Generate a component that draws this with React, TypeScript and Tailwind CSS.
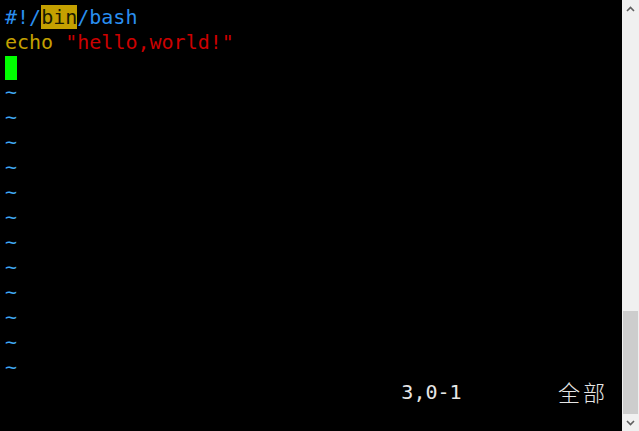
import React from 'react';

const tildes = Array.from({ length: 12 });

const App = () => {
  return (
    <div className="flex w-[639px] h-[431px] bg-black overflow-hidden">
      <div
        className="flex-1 pl-[4px] pt-[5px] text-[20px] leading-[25px] whitespace-pre"
        style={{ fontFamily: '"DejaVu Sans Mono", "Noto Sans CJK SC", monospace' }}
      >
        <div className="h-[25px] pl-[1px] text-[#2a8ff0]">
          #!/<span className="bg-[#c4a000] text-[#1a1a00]">bin</span>/bash
        </div>
        <div className="h-[25px] pl-[1px]">
          <span className="text-[#c4a000]">echo</span> <span className="text-[#cc0000]">"hello,world!"</span>
        </div>
        <div className="h-[25px] pl-[1px] flex items-center">
          <div className="w-[12px] h-[24px] bg-[#00ff00]" />
        </div>
        {tildes.map((_, i) => (
          <div key={i} className="h-[25px] pl-[1px] text-[#3fa9f5]">~</div>
        ))}
        <div className="h-[25px] text-[#e6e6e6] flex items-center">
          <span>{'                                 3,0-1        '}</span>
          <span
            className="text-[22px] leading-[22px] tracking-[3px] ml-[0px] -mt-[3px] font-light"
            style={{ fontFamily: '"Noto Sans CJK SC", sans-serif' }}
          >
            全部
          </span>
        </div>
      </div>
      <div className="w-[17px] h-full bg-[#f0f0f0] flex flex-col">
        <div className="h-[17px] flex items-center justify-center">
          <svg width="9" height="6" viewBox="0 0 9 6">
            <path d="M1 5 L4.5 1.5 L8 5" stroke="#606060" strokeWidth="1.6" fill="none" />
          </svg>
        </div>
        <div className="flex-1" />
        <div className="h-[103px] mx-[1px] bg-[#cdcdcd]" />
        <div className="h-[17px] flex items-center justify-center">
          <svg width="9" height="6" viewBox="0 0 9 6">
            <path d="M1 1 L4.5 4.5 L8 1" stroke="#606060" strokeWidth="1.6" fill="none" />
          </svg>
        </div>
      </div>
    </div>
  );
};

export default App;
